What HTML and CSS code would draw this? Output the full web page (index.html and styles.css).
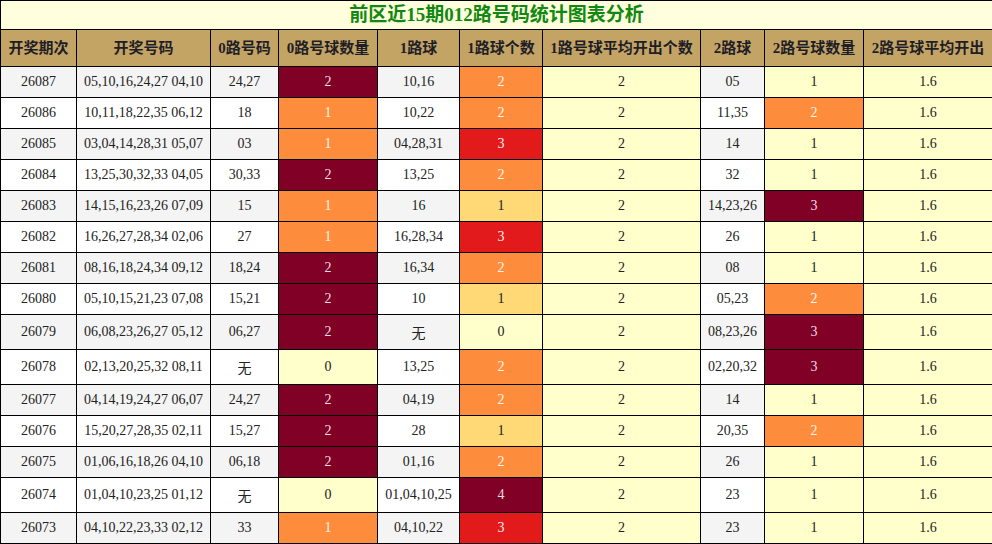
FILE: index.html
```html
<!DOCTYPE html>
<html lang="zh-CN">
<head>
<meta charset="utf-8">
<title>前区近15期012路号码统计图表分析</title>
<link rel="stylesheet" href="styles.css">
</head>
<body>
<table class="stats">
  <colgroup>
    <col class="c1"><col class="c2"><col class="c3"><col class="c4"><col class="c5">
    <col class="c6"><col class="c7"><col class="c8"><col class="c9"><col class="c10">
  </colgroup>
  <thead>
    <tr><th class="title" colspan="10">前区近15期012路号码统计图表分析</th></tr>
    <tr class="head">
      <th>开奖期次</th><th>开奖号码</th><th>0路号码</th><th>0路号球数量</th><th>1路球</th>
      <th>1路球个数</th><th>1路号球平均开出个数</th><th>2路球</th><th>2路号球数量</th><th>2路号球平均开出</th>
    </tr>
  </thead>
  <tbody>
    <tr class="odd"><td>26087</td><td>05,10,16,24,27 04,10</td><td>24,27</td><td class="l4">2</td><td>10,16</td><td class="l2">2</td><td class="l0">2</td><td>05</td><td class="l0">1</td><td class="l0">1.6</td></tr>
    <tr class="even"><td>26086</td><td>10,11,18,22,35 06,12</td><td>18</td><td class="l2">1</td><td>10,22</td><td class="l2">2</td><td class="l0">2</td><td>11,35</td><td class="l2">2</td><td class="l0">1.6</td></tr>
    <tr class="odd"><td>26085</td><td>03,04,14,28,31 05,07</td><td>03</td><td class="l2">1</td><td>04,28,31</td><td class="l3">3</td><td class="l0">2</td><td>14</td><td class="l0">1</td><td class="l0">1.6</td></tr>
    <tr class="even"><td>26084</td><td>13,25,30,32,33 04,05</td><td>30,33</td><td class="l4">2</td><td>13,25</td><td class="l2">2</td><td class="l0">2</td><td>32</td><td class="l0">1</td><td class="l0">1.6</td></tr>
    <tr class="odd"><td>26083</td><td>14,15,16,23,26 07,09</td><td>15</td><td class="l2">1</td><td>16</td><td class="l1">1</td><td class="l0">2</td><td>14,23,26</td><td class="l4">3</td><td class="l0">1.6</td></tr>
    <tr class="even"><td>26082</td><td>16,26,27,28,34 02,06</td><td>27</td><td class="l2">1</td><td>16,28,34</td><td class="l3">3</td><td class="l0">2</td><td>26</td><td class="l0">1</td><td class="l0">1.6</td></tr>
    <tr class="odd"><td>26081</td><td>08,16,18,24,34 09,12</td><td>18,24</td><td class="l4">2</td><td>16,34</td><td class="l2">2</td><td class="l0">2</td><td>08</td><td class="l0">1</td><td class="l0">1.6</td></tr>
    <tr class="even"><td>26080</td><td>05,10,15,21,23 07,08</td><td>15,21</td><td class="l4">2</td><td>10</td><td class="l1">1</td><td class="l0">2</td><td>05,23</td><td class="l2">2</td><td class="l0">1.6</td></tr>
    <tr class="odd"><td>26079</td><td>06,08,23,26,27 05,12</td><td>06,27</td><td class="l4">2</td><td class="none">无</td><td class="l0">0</td><td class="l0">2</td><td>08,23,26</td><td class="l4">3</td><td class="l0">1.6</td></tr>
    <tr class="even"><td>26078</td><td>02,13,20,25,32 08,11</td><td class="none">无</td><td class="l0">0</td><td>13,25</td><td class="l2">2</td><td class="l0">2</td><td>02,20,32</td><td class="l4">3</td><td class="l0">1.6</td></tr>
    <tr class="odd"><td>26077</td><td>04,14,19,24,27 06,07</td><td>24,27</td><td class="l4">2</td><td>04,19</td><td class="l2">2</td><td class="l0">2</td><td>14</td><td class="l0">1</td><td class="l0">1.6</td></tr>
    <tr class="even"><td>26076</td><td>15,20,27,28,35 02,11</td><td>15,27</td><td class="l4">2</td><td>28</td><td class="l1">1</td><td class="l0">2</td><td>20,35</td><td class="l2">2</td><td class="l0">1.6</td></tr>
    <tr class="odd"><td>26075</td><td>01,06,16,18,26 04,10</td><td>06,18</td><td class="l4">2</td><td>01,16</td><td class="l2">2</td><td class="l0">2</td><td>26</td><td class="l0">1</td><td class="l0">1.6</td></tr>
    <tr class="even"><td>26074</td><td>01,04,10,23,25 01,12</td><td class="none">无</td><td class="l0">0</td><td>01,04,10,25</td><td class="l4">4</td><td class="l0">2</td><td>23</td><td class="l0">1</td><td class="l0">1.6</td></tr>
    <tr class="odd"><td>26073</td><td>04,10,22,23,33 02,12</td><td>33</td><td class="l2">1</td><td>04,10,22</td><td class="l3">3</td><td class="l0">2</td><td>23</td><td class="l0">1</td><td class="l0">1.6</td></tr>
  </tbody>
</table>
</body>
</html>
```

FILE: styles.css
```css
html, body {
  margin: 0;
  padding: 0;
  background: #ffffff;
}

.stats {
  border-collapse: collapse;
  table-layout: fixed;
  width: 992px;
  font-family: "Liberation Serif", "Noto Sans CJK SC", serif;
  font-size: 14px;
  color: #222222;
}

.c1 { width: 76px; }
.c2 { width: 134px; }
.c3 { width: 68px; }
.c4 { width: 99px; }
.c5 { width: 82px; }
.c6 { width: 83px; }
.c7 { width: 158px; }
.c8 { width: 64px; }
.c9 { width: 99px; }
.c10 { width: 129px; }

.stats th,
.stats td {
  border: 1px solid #000000;
  text-align: center;
  white-space: nowrap;
  overflow: hidden;
}

.stats .title {
  background: #ffffdd;
  color: #118811;
  font-size: 19px;
  font-weight: bold;
  line-height: 28px;
  height: 28px;
  padding: 0;
}

.head th {
  background: #c4a464;
  color: #1e1e28;
  font-size: 15px;
  font-weight: bold;
  line-height: 22px;
  padding: 7px 2px;
}

.stats td {
  line-height: 16px;
  padding: 7px 2px;
}

.stats td.none {
  padding: 11px 2px 7px;
}

.odd td { background: #f4f4f4; }
.even td { background: #ffffff; }

.stats td.l0 { background: #ffffcc; color: #222222; }
.stats td.l1 { background: #fed976; color: #222222; }
.stats td.l2 { background: #fd8d3c; color: #fff4ee; }
.stats td.l3 { background: #e31a1c; color: #fff0f0; }
.stats td.l4 { background: #800026; color: #f0dde2; }
```
